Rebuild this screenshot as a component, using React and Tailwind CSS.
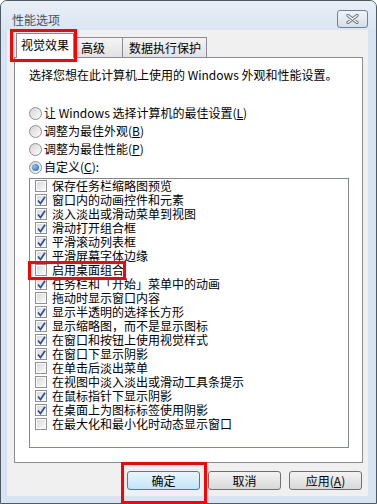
const font = "font-['Noto_Sans_CJK_SC','Noto_Sans',sans-serif]";

const effects = [
  { label: "保存任务栏缩略图预览", on: false },
  { label: "窗口内的动画控件和元素", on: true },
  { label: "淡入淡出或滑动菜单到视图", on: true },
  { label: "滑动打开组合框", on: true },
  { label: "平滑滚动列表框", on: true },
  { label: "平滑屏幕字体边缘", on: true },
  { label: "启用桌面组合", on: false },
  { label: "任务栏和「开始」菜单中的动画", on: true },
  { label: "拖动时显示窗口内容", on: false },
  { label: "显示半透明的选择长方形", on: true },
  { label: "显示缩略图，而不是显示图标", on: true },
  { label: "在窗口和按钮上使用视觉样式", on: true },
  { label: "在窗口下显示阴影", on: true },
  { label: "在单击后淡出菜单", on: false },
  { label: "在视图中淡入淡出或滑动工具条提示", on: false },
  { label: "在鼠标指针下显示阴影", on: true },
  { label: "在桌面上为图标标签使用阴影", on: true },
  { label: "在最大化和最小化时动态显示窗口", on: false },
];

const Radio = ({ on }) => (
  <span className="w-[13px] h-[13px] rounded-full border border-[#8e8f8f] bg-linear-to-br from-[#d4d4d4] to-[#fdfdfd] flex items-center justify-center shrink-0">
    {on && (
      <span className="w-[7px] h-[7px] rounded-full bg-radial-[at_35%_35%] from-[#8cc4f5] to-[#1a5cb3]" />
    )}
  </span>
);

const Check = ({ on }) => (
  <span className="w-[12px] h-[12px] border border-[#8e8f8f] bg-white p-[1px] shrink-0 flex">
    <span className="flex-1 bg-linear-to-br from-[#d9d9d9] to-[#f9f9f9] flex items-center justify-center">
      {on && (
        <svg width="9" height="9" viewBox="0 0 9 9">
          <path d="M1 4.5 L3.5 7.5 L8 0.8" fill="none" stroke="#2c4f9e" strokeWidth="1.7" />
        </svg>
      )}
    </span>
  </span>
);

const Btn = ({ children, primary }) => (
  <button
    className={`w-[73px] h-[19px] rounded-[3px] border text-[12px] leading-[12px] text-black flex items-center justify-center ${
      primary
        ? "border-[#3c7fb1] bg-linear-to-b from-[#e9f5fc] to-[#c4e4f7]"
        : "border-[#707070] bg-linear-to-b from-[#f3f3f3] to-[#d9d9d9]"
    }`}
  >
    {children}
  </button>
);

export default function App() {
  return (
    <div className={`relative w-[377px] h-[504px] bg-white ${font} text-[12px] leading-[14px] text-black`}>
      {/* window frame */}
      <div className="h-full flex flex-col border border-[#4f5966] rounded-t-[7px] bg-[#d8e4f1]">
        {/* title bar */}
        <div className="h-[29px] shrink-0 flex items-start justify-between pl-[11px] pr-[8px] pt-[9px] rounded-t-[6px] bg-linear-to-b from-[#e9eff6] to-[#dbe6f2]">
          <span className="mt-[3px] text-[#4a4f57]">性能选项</span>
          <button className="w-[31px] h-[18px] rounded-[3px] border border-[#72808f] bg-linear-to-b from-[#f0f4f9] to-[#d4dfeb] flex items-center justify-center">
            <svg width="13" height="10" viewBox="0 0 13 10">
              <path d="M2 1.5 L11 8.5 M11 1.5 L2 8.5" stroke="#5f6d7d" strokeWidth="3.2" strokeLinecap="round" />
              <path d="M2 1.5 L11 8.5 M11 1.5 L2 8.5" stroke="#ffffff" strokeWidth="1.4" strokeLinecap="round" />
            </svg>
          </button>
        </div>

        {/* client area */}
        <div className="ml-[6px] w-[361px] h-[466px] shrink-0 bg-[#f0f0f0] flex flex-col pl-[7px] pt-[3px]">
          {/* tabs */}
          <div className="h-[24px] flex items-end pl-[2px]">
            <div className="relative z-10 w-[58px] h-[25px] mb-[-1px] bg-white border border-b-0 border-[#898c95] flex items-center justify-center pb-[2px]">
              视觉效果
            </div>
            <div className="w-[49px] h-[20px] border border-b-0 border-l-0 border-[#898c95] bg-linear-to-b from-[#f4f4f4] to-[#e2e2e2] flex items-center pl-[7px] pt-[1px]">
              高级
            </div>
            <div className="w-[84px] h-[20px] border border-b-0 border-l-0 border-[#898c95] bg-linear-to-b from-[#f4f4f4] to-[#e2e2e2] flex items-center pl-[6px] pt-[1px]">
              数据执行保护
            </div>
          </div>

          {/* tab panel */}
          <div className="w-[349px] h-[406px] border border-[#898c95] bg-white pl-[14px] pt-[10px] flex flex-col">
            <p>选择您想在此计算机上使用的 Windows 外观和性能设置。</p>

            <div className="mt-[22px] flex flex-col">
              <label className="h-[18px] flex items-center gap-[2px]">
                <Radio />
                <span className="leading-[12px]">
                  让 Windows 选择计算机的最佳设置(<u>L</u>)
                </span>
              </label>
              <label className="h-[18px] flex items-center gap-[2px]">
                <Radio />
                <span className="leading-[12px]">
                  调整为最佳外观(<u>B</u>)
                </span>
              </label>
              <label className="h-[18px] flex items-center gap-[2px]">
                <Radio />
                <span className="leading-[12px]">
                  调整为最佳性能(<u>P</u>)
                </span>
              </label>
              <label className="h-[18px] flex items-center gap-[2px]">
                <Radio on />
                <span className="leading-[12px]">
                  自定义(<u>C</u>):
                </span>
              </label>
            </div>

            {/* effects list */}
            <div className="mt-[2px] w-[320px] h-[270px] border border-[#828790] flex flex-col">
              {effects.map((item) => (
                <div key={item.label} className="h-[14px] flex items-center gap-[5px] pl-[5px]">
                  <Check on={item.on} />
                  <span className="whitespace-nowrap leading-[12px]">{item.label}</span>
                </div>
              ))}
            </div>
          </div>

          {/* buttons */}
          <div className="mt-[8px] flex justify-end gap-[8px] pr-[6px]">
            <Btn primary>确定</Btn>
            <Btn>取消</Btn>
            <Btn>
              应用(<u>A</u>)
            </Btn>
          </div>
        </div>
      </div>

      {/* red highlight marks */}
      <div className="absolute left-[10px] top-[29px] w-[67px] h-[33px] border-[3px] border-[#ff0000] z-20" />
      <div className="absolute left-[28px] top-[261px] w-[98px] h-[19px] border-[3px] border-[#ff0000] z-20" />
      <div className="absolute left-[121px] top-[462px] w-[86px] h-[42px] border-[3px] border-[#ff0000] z-20" />
    </div>
  );
}
